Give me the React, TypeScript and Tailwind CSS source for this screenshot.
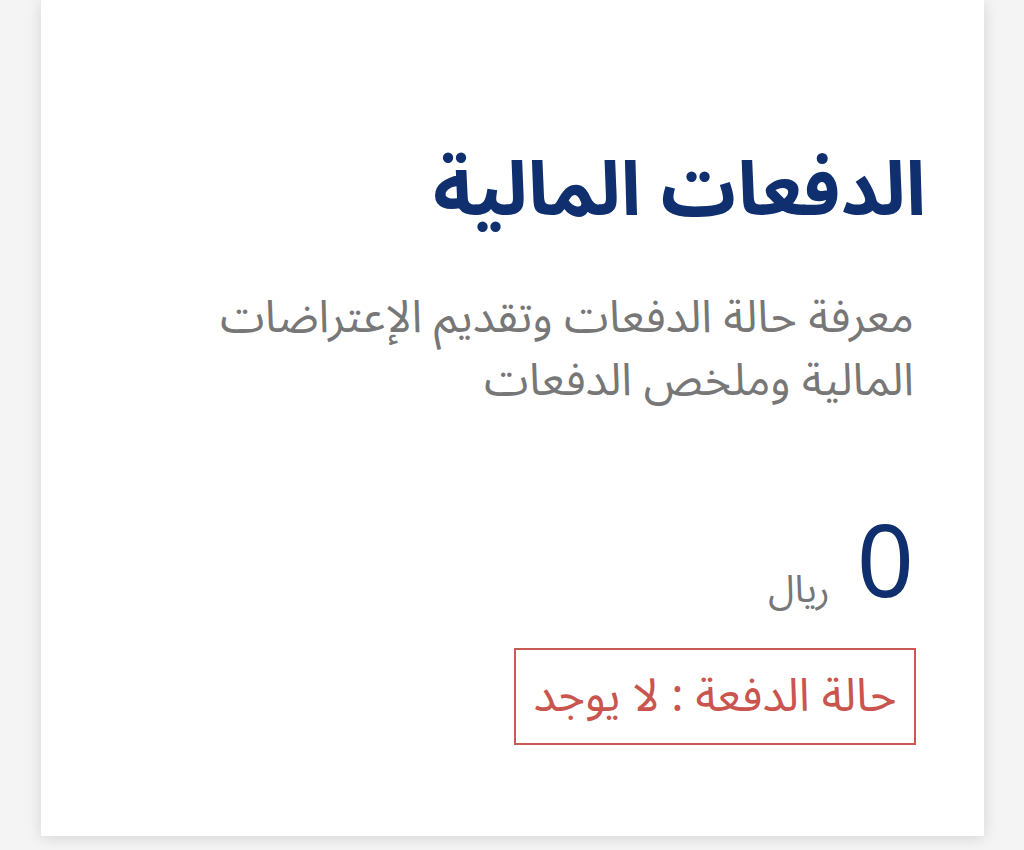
export default function App() {
  return (
    <div
      dir="rtl"
      className="min-h-[850px] bg-[#f4f4f4] flex justify-start pr-[40px]"
      style={{ fontFamily: '"Noto Sans Arabic", "Noto Sans", "DejaVu Sans", sans-serif' }}
    >
      <div className="w-[943px] h-[836px] bg-white shadow-[0_2px_14px_rgba(0,0,0,0.13)] pr-[58px] pl-[40px] pt-[146px]">
        <h2 className="text-[75px] leading-[90px] font-bold text-[#0f2f6e]">الدفعات المالية</h2>

        <p className="mt-[50px] mr-[12px] w-[730px] text-[45px] leading-[63px] text-[#777777]">
          معرفة حالة الدفعات وتقديم الإعتراضات المالية وملخص الدفعات
        </p>

        <div className="mt-[104px] mr-[12px] flex items-end gap-[27px]">
          <span className="text-[100px] leading-[100px] text-[#0f2f6e]">0</span>
          <span className="text-[38px] leading-[48px] text-[#777777] mb-[2px]">ريال</span>
        </div>

        <div className="mt-[32px] mr-[10px] w-[402px] flex justify-center items-center h-[97px] border-2 border-[#c75a54] text-[46px] text-[#c9554e]">
          حالة الدفعة : لا يوجد
        </div>
      </div>
    </div>
  );
}
